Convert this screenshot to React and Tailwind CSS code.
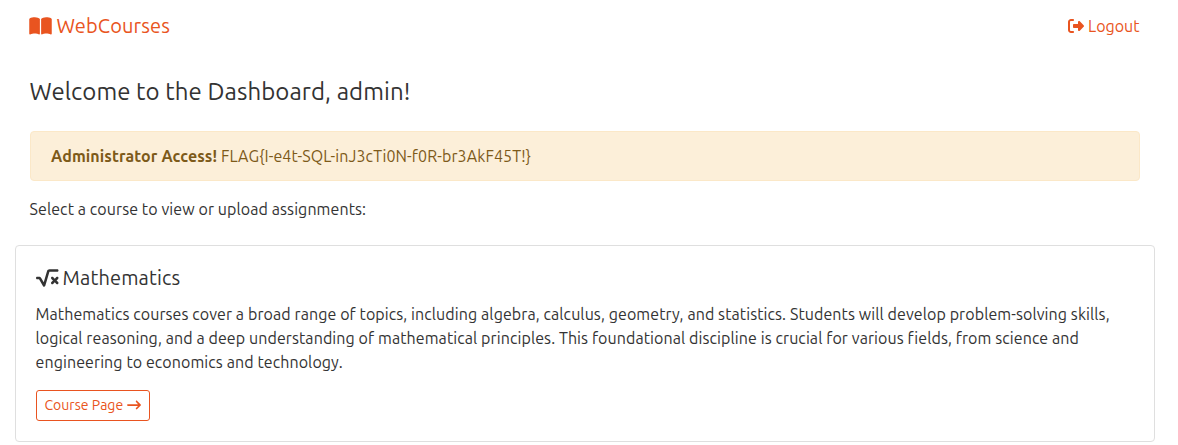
import { FaArrowRightLong, FaBookOpen, FaRightFromBracket, FaSquareRootVariable } from "react-icons/fa6";

function CourseCard({ lines, title }) {
  return (
    <section className="mt-6 mr-[23px] ml-[15px] h-[197px] rounded border border-[#dfdfdf] bg-white px-5 pt-5">
      <h2 className="flex h-6 items-center gap-1 text-xl tracking-[0.14px]">
        <FaSquareRootVariable className="h-5 w-[22.5px]" />
        <span>{title}</span>
      </h2>
      <p className="-ml-[0.5px] mt-3 whitespace-nowrap leading-6 tracking-[0.09px]">
        {lines.map((line) => (
          <span key={line} className="block">{line}</span>
        ))}
      </p>
      <button className="mt-4 flex h-[31px] w-[114px] items-center gap-1 rounded-[3px] border border-[#e95420] pb-0.5 pl-[7.5px] text-sm tracking-[0.04px] text-[#e95420]">
        <span>Course Page</span>
        <FaArrowRightLong size={14} />
      </button>
    </section>
  );
}

export default function App() {
  return (
    <div className="h-[445px] overflow-hidden bg-white font-['Ubuntu','Noto_Sans',sans-serif] text-base text-[#333]">
      <header className="flex h-[52px] items-center justify-between pr-[38.5px] pl-[29px] text-[#e95420]">
        <a className="flex items-center gap-1 text-xl tracking-[0.12px]">
          <FaBookOpen size={23} className="h-5" />
          <span className="pl-[0.5px]">WebCourses</span>
        </a>
        <a className="flex items-center gap-1">
          <FaRightFromBracket size={16} />
          <span>Logout</span>
        </a>
      </header>
      <main>
        <h1 className="mt-[25px] ml-[29.5px] text-2xl leading-[29px] tracking-[0.08px]">Welcome to the Dashboard, admin!</h1>
        <div className="mt-[25px] mr-[38px] ml-[30px] h-[50px] rounded border border-[#fbe8c8] bg-[#fcefd9] px-5 py-3 leading-6 tracking-[0.1px] text-[#7d5a19]">
          <strong className="font-bold">Administrator Access!</strong> FLAG&#123;I-e4t-SQL-inJ3cTi0N-f0R-br3AkF45T!&#125;
        </div>
        <p className="mt-4 ml-[29.5px] leading-6 tracking-[0.09px]">Select a course to view or upload assignments:</p>
        <CourseCard
          title="Mathematics"
          lines={[
            "Mathematics courses cover a broad range of topics, including algebra, calculus, geometry, and statistics. Students will develop problem-solving skills,",
            "logical reasoning, and a deep understanding of mathematical principles. This foundational discipline is crucial for various fields, from science and",
            "engineering to economics and technology.",
          ]}
        />
      </main>
    </div>
  );
}
